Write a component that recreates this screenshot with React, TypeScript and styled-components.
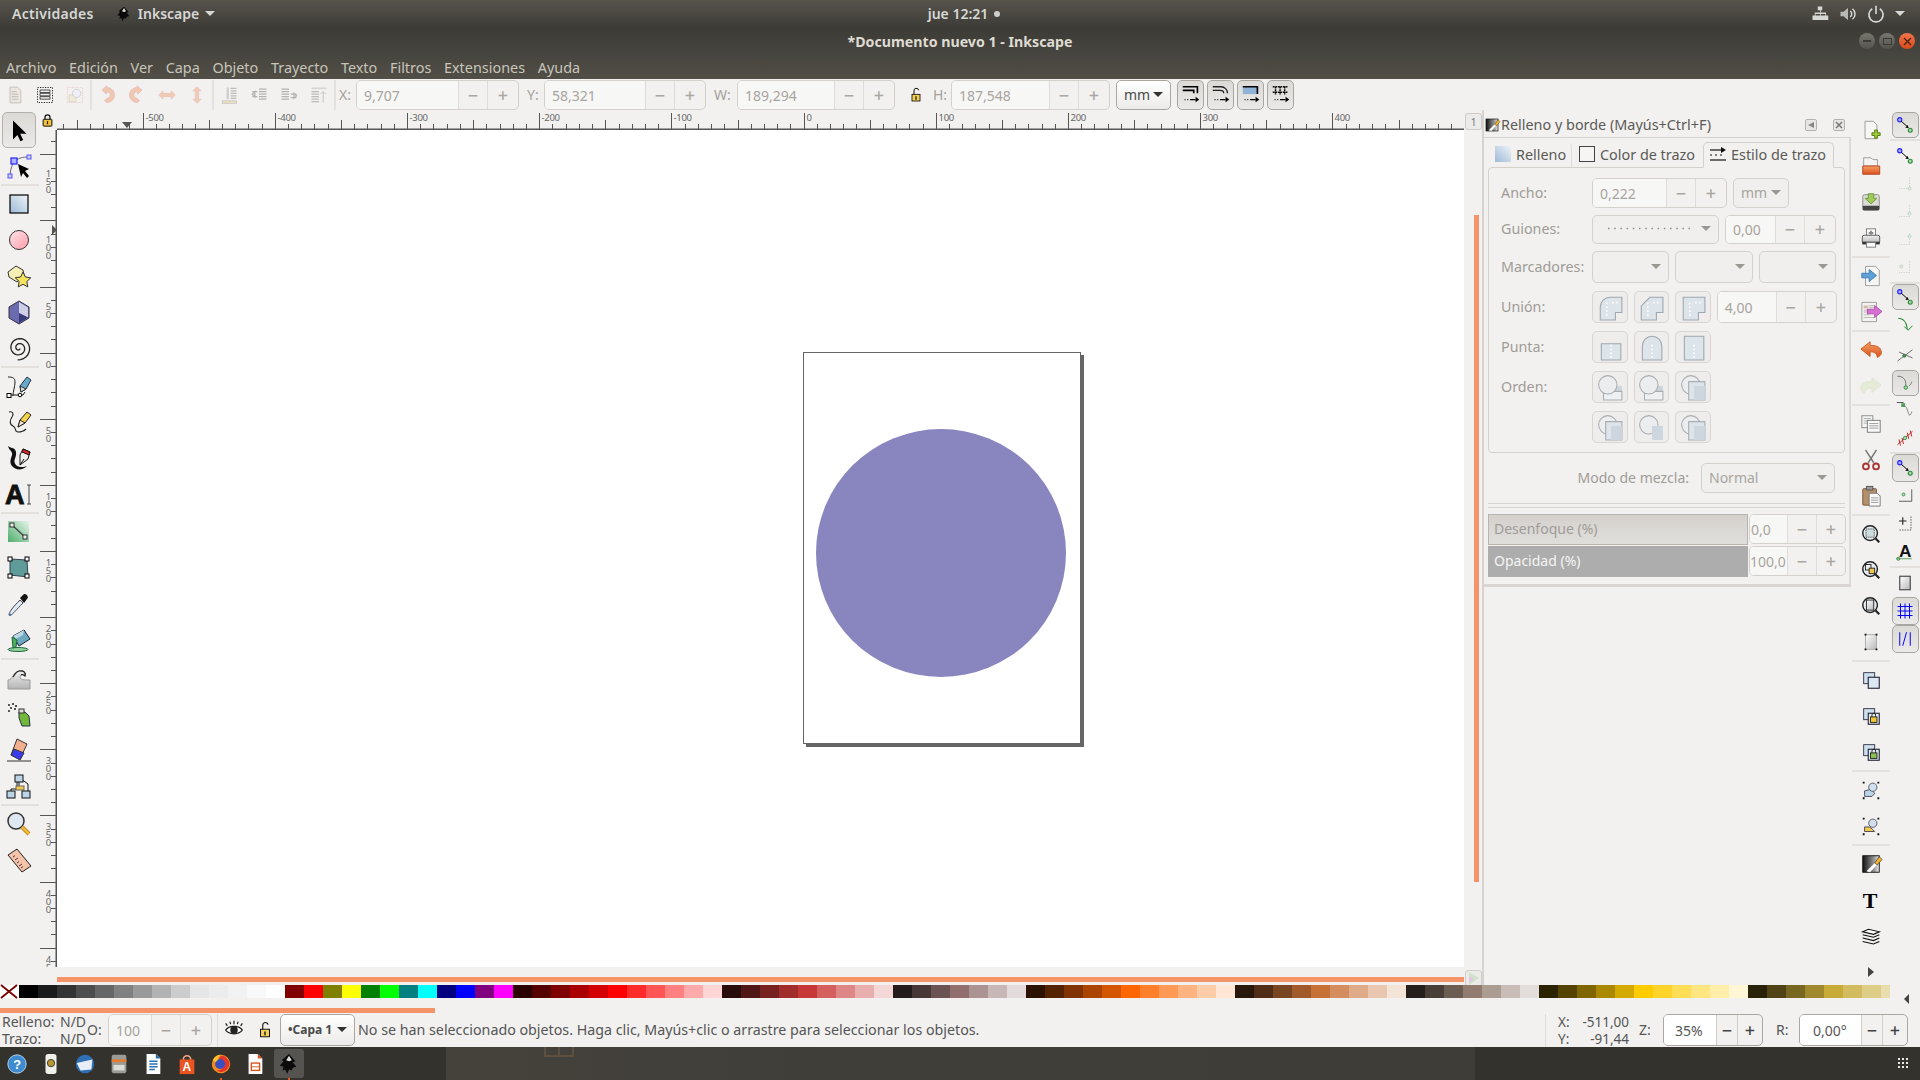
import React from "react";
import styled, { createGlobalStyle } from "styled-components";

const GlobalStyle = createGlobalStyle`
  html, body { margin: 0; padding: 0; background: #f2f1f0; overflow: hidden; }
  body { font-family: "Noto Sans", "Open Sans", sans-serif; font-size: 14.3px; color: #555; }
  svg { overflow: visible; display: block; flex: none; }
`;

const Screen = styled.div`
  width: 1920px; height: 1080px; display: flex; flex-direction: column; overflow: hidden; position: relative;
`;

/* ---- desktop bar + window title ---- */
const TopBar = styled.div`
  height: 27px; flex: none; display: grid; grid-template-columns: 1fr auto 1fr; align-items: center;
  background: linear-gradient(#57544c, #3e3c37); color: #d6d8d6; font-weight: 600; font-size: 14px;
`;
const TopLeft = styled.div`display: flex; align-items: center; padding-left: 12px;`;
const Activities = styled.span`letter-spacing: 0.3px;`;
const TopRight = styled.div`display: flex; align-items: center; justify-content: flex-end; gap: 10px; padding-right: 15px;`;
const AppName = styled.div`display: flex; align-items: center; gap: 6px; margin-left: 22px;`;
const DownCaret = styled.span`
  width: 0; height: 0; border-left: 5px solid transparent; border-right: 5px solid transparent;
  border-top: 5px solid ${(p: { $c?: string }) => p.$c || "#d6d8d6"};
`;
const Clock = styled.div`display: flex; align-items: center; gap: 6px; margin-left: 8px;`;
const Dot = styled.span`width: 6px; height: 6px; border-radius: 50%; background: #cfcfcc;`;

const TitleBar = styled.div`
  height: 52px; flex: none; display: flex; flex-direction: column;
  background: linear-gradient(#3c3b36, #514e47); position: relative;
`;
const TitleText = styled.div`
  height: 29px; flex: none; display: flex; align-items: center; justify-content: center;
  color: #dfdbd2; font-weight: 700; font-size: 14.2px;
`;
const WinButtons = styled.div`position: absolute; right: 5px; top: 6px; display: flex; gap: 4px;`;
const WinBtn = styled.div<{ $close?: boolean }>`
  width: 16px; height: 16px; border-radius: 50%; display: flex; align-items: center; justify-content: center;
  background: ${(p) => (p.$close ? "linear-gradient(#f0764a,#d9491b)" : "linear-gradient(#78766f,#55534d)")};
`;
const MenuBar = styled.div`display: flex; height: 23px; align-items: center; padding: 0 0 1px 6px; box-sizing: border-box; gap: 12.7px; color: #c8c5ba; font-size: 14.4px;`;

/* ---- controls toolbar ---- */
const ControlsBar = styled.div`height: 31px; flex: none; display: flex; align-items: flex-start; padding-top: 1px; box-sizing: border-box;`;
const BarIcon = styled.div<{ $faded?: boolean; $ml?: number }>`
  width: 30px; height: 30px; margin-left: ${(p) => p.$ml || 0}px; flex: none; display: flex; align-items: center; justify-content: center; opacity: ${(p) => (p.$faded ? 0.5 : 1)};
`;
const VSep = styled.div`width: 2px; height: 30px; background: #e3e0dd; flex: none;`;
const BarLabel = styled.div<{ $w: number; $ml?: number }>`
  width: ${(p) => p.$w}px; margin-left: ${(p) => p.$ml || 0}px; height: 30px; line-height: 30px; color: #a5a19c; flex: none; font-size: 14px;
`;
const SpinBox = styled.div<{ $w: number; $h?: number; $on?: boolean }>`
  width: ${(p) => p.$w}px; height: ${(p) => p.$h || 30}px; flex: none; box-sizing: border-box; display: flex;
  border: 1px solid ${(p) => (p.$on ? "#aaa7a2" : "#d4d1cd")}; border-radius: 5px; overflow: hidden;
  color: ${(p) => (p.$on ? "#555" : "#a8a4a0")}; font-size: 14px;
`;
const SpinField = styled.div<{ $pad?: number; $on?: boolean }>`
  flex: 1; min-width: 0; background: ${(p) => (p.$on ? "#fff" : "#f7f7f6")}; padding-left: ${(p) => p.$pad ?? 7}px; display: flex; align-items: center; white-space: nowrap;
`;
const SpinBtn = styled.div<{ $on?: boolean; $w: number }>`
  width: ${(p) => p.$w}px; flex: none; display: flex; align-items: center; justify-content: center; box-sizing: border-box;
  border-left: 1px solid ${(p) => (p.$on ? "#d0cdc9" : "#dedbd8")}; font-size: 18px; font-weight: 500;
  color: ${(p) => (p.$on ? "#444" : "#aaa7a3")};
`;
const ComboBox = styled.div<{ $w: number; $h?: number; $on?: boolean; $ml?: number; $bold?: boolean }>`
  width: ${(p) => p.$w}px; height: ${(p) => p.$h || 30}px; margin-left: ${(p) => p.$ml || 0}px; flex: none; box-sizing: border-box;
  display: flex; align-items: center; justify-content: space-between; padding: 0 7px 1px;
  border: 1px solid ${(p) => (p.$on ? "#aaa7a2" : "#d4d1cd")}; border-radius: 5px;
  background: ${(p) => (p.$on ? "linear-gradient(#fff,#ecebe9)" : "#f0efed")};
  color: ${(p) => (p.$on ? "#4a4a4a" : "#a8a4a0")}; font-size: ${(p) => (p.$bold ? 12 : 14)}px; font-weight: ${(p) => (p.$bold ? 700 : 400)};
`;
const DashSample = styled.svg`margin-left: 8px;`;
const ToggleBtn = styled.div<{ $w?: number; $h?: number }>`
  width: ${(p) => p.$w || 27}px; height: ${(p) => p.$h || 30}px; flex: none; box-sizing: border-box; display: flex; align-items: center; justify-content: center;
  border: 1px solid #a9a6a2; border-radius: 5px; background: linear-gradient(#dcdad7, #ebe9e7);
`;
const ToggleRow = styled.div`display: flex; gap: 3px; margin-left: 6px;`;

/* ---- workspace ---- */
const Workspace = styled.div`flex: 1; display: flex; min-height: 0;`;
const ToolColumn = styled.div`
  width: 40px; flex: none; display: flex; flex-direction: column; align-items: center; padding-top: 2px; box-sizing: border-box;
`;
const ToolBtn = styled.div<{ $on?: boolean }>`
  width: 34px; height: 36px; flex: none; box-sizing: border-box; margin-left: -3px; display: flex; align-items: center; justify-content: center;
  border: 1px solid ${(p) => (p.$on ? "#b4b1ad" : "transparent")}; border-radius: 5px;
  background: ${(p) => (p.$on ? "linear-gradient(#dcdad7,#ebe9e7)" : "none")};
`;
const ToolSep = styled.div`width: 38px; height: 2px; flex: none; margin-left: -1px; background: #e3e0dd;`;

const Center = styled.div`width: 1442px; flex: none; display: flex; flex-direction: column;`;
const HRulerRow = styled.div`height: 20px; flex: none; display: flex;`;
const RulerCorner = styled.div`width: 17px; flex: none; padding-top: 3px; box-sizing: border-box;`;
const MidRow = styled.div`height: 837px; flex: none; display: flex;`;
const VRulerSvg = styled.svg`overflow: hidden;`;
const VDigits = styled.text`
  writing-mode: vertical-rl; text-orientation: upright; font-size: 9.500px; letter-spacing: -5px; fill: #666;
`;
const Canvas = styled.div`width: 1407px; flex: none; background: #fff; position: relative; overflow: hidden;`;
const Page = styled.div`
  position: absolute; left: 746px; top: 222px; width: 278px; height: 392px; box-sizing: border-box; background: #fff;
  border: 1px solid #666; box-shadow: 3px 3px 0 #666;
`;
const Blob = styled.div`
  position: absolute; left: 12px; top: 76px; width: 250px; height: 248px; border-radius: 50%; background: #8885bf;
`;
const VGutter = styled.div`flex: 1; padding: 85px 0 0 10px; box-sizing: border-box;`;
const VThumb = styled.div`width: 5px; height: 667px; background: #f59469;`;
const HBarRow = styled.div`flex: 1; display: flex; min-height: 0;`;
const HTrack = styled.div`width: 1424px; padding: 10px 0 0 17px; box-sizing: border-box; display: flex;`;
const HThumb = styled.div`width: 1407px; height: 5px; background: #f59469;`;
const CornerBtn = styled.div`
  width: 15px; height: 15px; margin: 3px 0 0 1px; border: 1px solid #cfccc8; border-radius: 3px; background: #ecebe9; overflow: hidden;
  display: flex; align-items: center; justify-content: center; color: #777; font-size: 10px;
`;

/* ---- dialog ---- */
const DockPanel = styled.div`
  width: 370px; flex: none; box-sizing: border-box; border-left: 2px solid #d6d3d0; display: flex; flex-direction: column; padding-top: 3px;
`;
const DockHead = styled.div`height: 24px; flex: none; display: flex; align-items: center; gap: 1px; color: #5c5a56; font-size: 14.4px;`;
const DockTitle = styled.div`flex: 1; white-space: nowrap; padding-bottom: 2px;`;
const DockBtns = styled.div`display: flex; gap: 16px; margin-right: 7px;`;
const MiniBtn = styled.div`
  width: 10px; height: 10px; border: 1px solid #b5b2ae; border-radius: 2px; background: #e8e6e4; display: flex; align-items: center; justify-content: center;
`;
const DockFrame = styled.div`
  width: 367px; box-sizing: border-box; border-bottom: 3px solid #d8d5d2; border-right: 2px solid #dcd9d6;
  border-top: 1px solid #d4d1cd; padding: 0 4px 7px; display: flex; flex-direction: column;
`;
const TabRow = styled.div`height: 30px; flex: none; display: flex; align-items: flex-end; position: relative; z-index: 1; margin-bottom: -1px;`;
const Tab = styled.div<{ $w: number; $active?: boolean; $sep?: boolean }>`
  width: ${(p) => p.$w}px; height: 26px; box-sizing: border-box; display: flex; align-items: center; gap: 5px; padding: 0 0 2px 6px; color: #5c5a56; font-size: 14.4px; white-space: nowrap;
  border: 1px solid ${(p) => (p.$active ? "#d4d1cd" : "transparent")}; border-bottom-color: ${(p) => (p.$active ? "#f2f1f0" : "transparent")};
  border-radius: 5px 5px 0 0; background: ${(p) => (p.$active ? "#f2f1f0" : "none")};
  border-right-color: ${(p) => (p.$sep ? "#dedbd8" : p.$active ? "#d4d1cd" : "transparent")};
`;
const StrokeFrame = styled.div`
  border: 1px solid #d4d1cd; border-radius: 4px; padding: 10px 0 9px 12px; display: flex; flex-direction: column; gap: 8px; height: 286px; box-sizing: border-box;
`;
const FormRow = styled.div<{ $h: number; $mt?: number }>`height: ${(p) => p.$h}px; margin-top: ${(p) => p.$mt || 0}px; flex: none; display: flex; align-items: center; gap: 6px;`;
const FormLabel = styled.div`width: 85px; flex: none; color: #a09c97; font-size: 14.3px; padding-bottom: 1px;`;
const StyleBtn = styled.div`
  width: 35.6px; height: 32px; flex: none; box-sizing: border-box; border: 1px solid #d8d5d2; border-radius: 5px; background: #eeedeb; display: flex; align-items: center; justify-content: center;
`;
const BlendRow = styled.div`height: 30px; margin-top: 10px; flex: none; display: flex; align-items: center; justify-content: flex-end; padding-right: 10px; gap: 12px; color: #a09c97; font-size: 14px;`;
const BlendLabel = styled.span`padding-bottom: 2px;`;
const DoubleRule = styled.div`height: 3px; flex: none; margin-top: 10px; border-top: 1px solid #d6d3d0; border-bottom: 1px solid #d6d3d0;`;
const SliderRow = styled.div<{ $first?: boolean }>`display: flex; gap: 1px; height: 31px; margin-top: ${(p) => (p.$first ? 6 : 1)}px; flex: none;`;
const Slider = styled.div<{ $full?: boolean }>`
  width: 260px; flex: none; box-sizing: border-box; padding: 0 0 3px 5px; display: flex; align-items: center; font-size: 14px;
  border: 1px solid ${(p) => (p.$full ? "#adadad" : "#b8b5b1")};
  color: ${(p) => (p.$full ? "#f5f5f5" : "#a09c97")};
  background: ${(p) => (p.$full ? "#adadad" : "linear-gradient(#d4d1cd,#e0dedb)")};
`;

/* ---- right toolbars ---- */
const CmdColumn = styled.div`width: 38px; flex: none; display: flex; flex-direction: column; align-items: center; padding-top: 2px; box-sizing: border-box;`;
const CmdBtn = styled.div`width: 38px; height: 36px; flex: none; display: flex; align-items: center; justify-content: center;`;
const CmdSep = styled.div`width: 38px; height: 2px; flex: none; background: #e3e0dd;`;
const SnapColumn = styled.div`width: 30px; flex: none; display: flex; flex-direction: column; align-items: center; padding-top: 2px; box-sizing: border-box;`;
const SnapBtn = styled.div<{ $h?: number }>`width: 28px; height: ${(p) => p.$h || 28}px; flex: none; display: flex; align-items: center; justify-content: center;`;
const SnapSep = styled.div<{ $h?: number }>`width: 30px; height: 2px; flex: none; margin: ${(p) => ((p.$h || 2) - 2) / 2}px 0; background: #e3e0dd;`;

/* ---- palette + status ---- */
const PaletteRow = styled.div`height: 13px; flex: none; display: flex; position: relative;`;
const NoColor = styled.div`width: 19px; flex: none; background: #fff;`;
const Swatch = styled.div<{ $c: string; $w?: number }>`width: ${(p) => p.$w || 19}px; flex: none; background: ${(p) => p.$c};`;
const PalGap = styled.div`height: 10px; flex: none; padding-top: 10px; box-sizing: border-box;`;
const PalThumb = styled.div`width: 435px; height: 5px; background: #f59469; margin-bottom: 1px;`;
const PalArrow = styled.div`
  position: absolute; right: 11px; top: 0; width: 0; height: 0; border-top: 5px solid transparent; border-bottom: 5px solid transparent; border-right: 5px solid #444; margin-top: 9px;
`;
const StatusBar = styled.div`height: 33px; flex: none; display: flex; align-items: flex-start; color: #555; margin-top: 6px; padding-right: 12px; box-sizing: border-box;`;
const FillInfo = styled.div`
  width: 87px; flex: none; padding-left: 2px; margin-top: -1px; display: grid; grid-template-columns: 58px auto; grid-auto-rows: 17px; font-size: 14px; box-sizing: border-box; line-height: 17px;
`;
const OLabel = styled.div`width: 21px; flex: none; height: 32px; line-height: 32px; font-size: 14px;`;
const StatusSep = styled.div<{ $ml?: number }>`width: 1px; height: 33px; background: #dedbd8; margin-left: ${(p) => p.$ml || 0}px; flex: none;`;
const StatusIcon = styled.div<{ $w: number }>`width: ${(p) => p.$w}px; height: 32px; flex: none; display: flex; align-items: center; justify-content: center;`;
const Message = styled.div`flex: 1; height: 32px; line-height: 31px; padding-left: 3px; white-space: nowrap; color: #555; font-size: 14.25px;`;
const Coords = styled.div`
  width: 71px; margin-left: 12px; flex: none; display: grid; grid-template-columns: auto 1fr; grid-auto-rows: 17px; line-height: 17px; font-size: 13.5px; box-sizing: border-box;
`;
const CoordVal = styled.div`text-align: right;`;
const ZLabel = styled.div<{ $w: number; $ml: number }>`width: ${(p) => p.$w}px; margin-left: ${(p) => p.$ml}px; flex: none; height: 32px; line-height: 32px; font-size: 14px;`;

/* ---- dock ---- */
const DockBar = styled.div`height: 33px; flex: none; display: flex; background: #33322d;`;
const DockLeft = styled.div`width: 446px; flex: none; display: flex; box-sizing: border-box;`;
const DockItem = styled.div<{ $active?: boolean }>`
  width: 34px; height: 33px; flex: none; display: flex; align-items: center; justify-content: center; position: relative; box-sizing: border-box;
  &::before { content: ""; position: absolute; inset: 2px; border-radius: 3px; background: ${(p) => (p.$active ? "#565450" : "none")}; }
  svg { position: relative; }
`;
const RunDot = styled.span`position: absolute; bottom: 0; left: 16px; width: 2px; height: 2px; background: #e95420;`;
const Wallpaper = styled.div`
  width: 1029px; flex: none; background: linear-gradient(90deg, #45423c, #403e39 40%, #3f3d38); overflow: hidden; padding-left: 98px; box-sizing: border-box;
`;
const DockRight = styled.div`flex: 1; display: flex; justify-content: flex-end; align-items: center; padding-right: 11px;`;
const HiddenDefs = styled.svg`position: absolute;`;

/* ---- drawings ---- */
const I = ({ s = 24, children }: { s?: number; children: React.ReactNode }) => (
  <svg width={s} height={s} viewBox="0 0 24 24">{children}</svg>
);

const Defs = () => (
  <HiddenDefs width="0" height="0">
    <defs>
      <linearGradient id="gb" x1="0" y1="1" x2="1" y2="0"><stop offset="0" stopColor="#9dbad6" /><stop offset="1" stopColor="#eef3f8" /></linearGradient>
      <linearGradient id="gp" x1="0" y1="0" x2="1" y2="1"><stop offset="0" stopColor="#ffe6ea" /><stop offset="1" stopColor="#ff9aa8" /></linearGradient>
      <linearGradient id="gg" x1="0" y1="1" x2="1" y2="0"><stop offset="0" stopColor="#4fae6c" /><stop offset="1" stopColor="#e6f4ea" /></linearGradient>
      <linearGradient id="gw" x1="0" y1="0" x2="1" y2="1"><stop offset="0" stopColor="#fff" /><stop offset="1" stopColor="#b9b9b9" /></linearGradient>
      <linearGradient id="go" x1="0" y1="0" x2="0" y2="1"><stop offset="0" stopColor="#f6a163" /><stop offset="1" stopColor="#d9531e" /></linearGradient>
      <linearGradient id="gs" x1="0" y1="0" x2="0" y2="1"><stop offset="0" stopColor="#f0f0f0" /><stop offset="1" stopColor="#b4b4b4" /></linearGradient>
      <linearGradient id="gn" x1="0" y1="0" x2="1" y2="0"><stop offset="0" stopColor="#111" /><stop offset="0.7" stopColor="#999" /><stop offset="1" stopColor="#eee" /></linearGradient>
    </defs>
  </HiddenDefs>
);

const spiralPath = () => {
  const turns = 2.2 * 2 * Math.PI;
  const pts: string[] = [];
  for (let a = 0; a <= turns; a += 0.25) {
    const r = 1 + (a / turns) * 11;
    pts.push(`${(12 + r * Math.cos(a + 0.5)).toFixed(2)} ${(12 + r * Math.sin(a + 0.5)).toFixed(2)}`);
  }
  return "M" + pts.join("L");
};

const Lens = ({ children }: { children?: React.ReactNode }) => (
  <>
    <circle cx="11" cy="11" r="8" fill="#e8eef3" stroke="#222" strokeWidth="1.6" />
    {children}
    <path d="M17 17l4 4" stroke="#222" strokeWidth="2.4" />
  </>
);
const Doc = () => <path d="M5.500 2.500h9l4 4v15h-13z" fill="#f6f6f5" stroke="#999" />;
const Stacked = ({ children }: { children?: React.ReactNode }) => (
  <>
    <rect x="4" y="4" width="12" height="12" fill="#cfe0ee" stroke="#334" />
    <rect x="9" y="9" width="12" height="12" fill="#dce8f2" stroke="#223" strokeWidth="1.2" />
    {children}
  </>
);
const Padlock = ({ c = "#f3c430" }: { c?: string }) => (
  <>
    <rect x="11.500" y="13" width="7" height="6" fill={c} stroke="#222" />
    <path d="M13 13v-2a2 2 0 014 0v2" fill="none" stroke="#222" />
  </>
);

const toolIcons: Record<string, React.ReactNode> = {
  select: <path d="M6 2.500v19l4.400-4.600 3 6.400 2.800-1.300-3-6.200h6.300z" fill="#000" />,
  node: (
    <>
      <path d="M6 10C4 13 3.500 17 3 21M10 5.500c4-2 7-2.500 10-2.500" fill="none" stroke="#667" />
      <rect x="4" y="4" width="6" height="6" fill="#b0b4ff" stroke="#22f" strokeWidth="1.200" />
      <rect x="20" y="1" width="4" height="4" fill="#ccd" stroke="#55f" />
      <rect x="1" y="20" width="4" height="4" fill="#ccd" stroke="#55f" />
      <path d="M11 10l11 5-4 2 4 5-2 2-4-5-2 4z" fill="#000" />
    </>
  ),
  rect: <rect x="3" y="3" width="18" height="18" fill="url(#gb)" stroke="#000" strokeWidth="1.200" />,
  ellipse: <circle cx="12" cy="12" r="9.500" fill="url(#gp)" stroke="#333" strokeWidth="1" />,
  star: (
    <>
      <path d="M9 2l7 4 1 5-7 7-8-5-1-5z" fill="#f6efb5" stroke="#333" />
      <path d="M16 8l2.400 5 5.400.8-4 3.700 1 5.400-4.800-2.600-4.800 2.600 1-5.400-4-3.700 5.400-.8z" fill="#f6e45e" stroke="#333" />
    </>
  ),
  cube: (
    <>
      <path d="M12 1l10 6v11l-10 6-10-6V7z" fill="#6a6aae" stroke="#334" />
      <path d="M12 13V2l9 5.500v10z" fill="#cfcfe8" />
      <path d="M12 13l9 4.500-9 5.500z" fill="#383878" />
    </>
  ),
  spiral: <path d={spiralPath()} fill="none" stroke="#222" strokeWidth="1.300" />,
  pen: (
    <>
      <path d="M1 3c5 0 7 1 7 5 0 5-2 9-2 14" fill="none" stroke="#222" />
      <path d="M2 21h14l2-3" fill="none" stroke="#222" />
      <rect x="0" y="19.500" width="4" height="4" fill="#fff" stroke="#000" />
      <circle cx="13" cy="21" r="1.800" fill="#fff" stroke="#000" />
      <path d="M14 18l-1-6 7-9 4 3-5 9z" fill="#68aac8" stroke="#234" />
      <path d="M13 12l6 3-5 3z" fill="#eadfc6" stroke="#234" />
    </>
  ),
  pencil: (
    <>
      <path d="M2 2c4-1 5 2 3 5s-3 7 1 9 1 6 5 6 6-1 8-3" fill="none" stroke="#222" strokeWidth="1.100" />
      <path d="M11 17l2-7 7-8 4 3-6 8z" fill="#f6d24a" stroke="#222" />
      <path d="M11 17l2-7 5 3z" fill="#f5e6cc" stroke="#222" />
    </>
  ),
  calli: (
    <>
      <path d="M1 0c4 3 7 1 8 6 1 6-4 8 0 13 3 3 9 2 11 1-4 4-11 5-15 0C1 15 6 10 5 7 4 4 2 4 1 0z" fill="#111" />
      <path d="M16 3l7 3-2 7-8 6 0-10z" fill="#eee" stroke="#111" />
      <path d="M16 3l7 3-1 3-7-3z" fill="#d22" stroke="#111" />
      <path d="M13 19l4-6" stroke="#111" />
    </>
  ),
  text: (
    <>
      <text x="-2" y="22" fontFamily="Liberation Sans, sans-serif" fontWeight="700" fontSize="27" fill="#111" stroke="#111" strokeWidth=".9">A</text>
      <path d="M20 3h4M22 3v19M20 22h4" fill="none" stroke="#333" strokeWidth=".9" />
    </>
  ),
  gradient: (
    <>
      <rect x="1" y="1" width="21" height="21" fill="url(#gg)" />
      <path d="M5 5l13 12" stroke="#444" strokeWidth="1.400" />
      <rect x="3" y="3" width="4" height="4" fill="#eee" stroke="#333" />
      <rect x="16" y="15" width="4" height="4" fill="#eee" stroke="#333" />
    </>
  ),
  mesh: (
    <>
      <path d="M3 3l17 1 1 17-18-2z" fill="#5f9b98" stroke="#345" />
      <rect x="1" y="1" width="4" height="4" fill="#fff" stroke="#000" />
      <rect x="18" y="1" width="4" height="4" fill="#fff" stroke="#000" />
      <rect x="1" y="18" width="4" height="4" fill="#fff" stroke="#000" />
      <rect x="18" y="18" width="4" height="4" fill="#fff" stroke="#000" />
    </>
  ),
  dropper: (
    <>
      <path d="M2 23c0-3 4-8 11-15l3 3C9 18 6 22 4 23z" fill="#dfe9f0" stroke="#445" />
      <path d="M1.500 23.500l2-2 1 1.200-1 1z" fill="#3b78b0" />
      <path d="M13 6l3-3c2-3 7 2 4 4l-3 4z" fill="#111" />
    </>
  ),
  bucket: (
    <>
      <ellipse cx="11" cy="21.500" rx="10" ry="2" fill="#8fd39a" stroke="#264" />
      <path d="M6 8l11-6 6 9-11 7z" fill="#6ea8c0" stroke="#123" />
      <path d="M6 8l11-6-1 5-7 4z" fill="#b9d6e2" />
      <path d="M5 9l1 11 3-1 1-7z" fill="#4cae5b" stroke="#264" />
    </>
  ),
  tweak: (
    <>
      <path d="M1 23V14c5 0 5-8 11-9 5-1 7 2 6 5-2-2-5-2-5 1s4 3 10 3v9z" fill="url(#gs)" stroke="#999" />
      <path d="M6 11c2-3 3-5.500 6-6 5-1 7 2 6 5-1-1-2.500-2-4-1" fill="none" stroke="#222" strokeWidth="1.200" />
    </>
  ),
  spray: (
    <>
      <path d="M12 10h6l4 4 1 10-8 0-3-8z" fill="#72b63c" stroke="#234" />
      <rect x="12" y="7" width="5" height="4" fill="#ddd" stroke="#333" />
      <g fill="#222"><circle cx="2" cy="3" r="1" /><circle cx="6" cy="2" r="1" /><circle cx="9" cy="4" r="1.100" /><circle cx="4" cy="6" r="1" /><circle cx="8" cy="7" r="1" /><circle cx="2" cy="9" r="1" /></g>
    </>
  ),
  eraser: (
    <>
      <path d="M10 1l10 5-7 15-9-4z" fill="#f2b08f" stroke="#333" />
      <path d="M7 11l10 4-4 7-9-5z" fill="#3b3bee" stroke="#333" />
      <path d="M0 23h24" stroke="#333" />
    </>
  ),
  connector: (
    <>
      <path d="M10 8v7H4v4M14 5l7 5v8M12 7v6" fill="none" stroke="#111" />
      <rect x="8" y="1" width="8" height="7" fill="#bcd4e8" stroke="#111" />
      <rect x="9" y="12" width="8" height="4" fill="#f3c84b" stroke="#666" />
      <rect x="0" y="17" width="8" height="7" fill="#bcd4e8" stroke="#111" />
      <rect x="15" y="17" width="8" height="7" fill="#bcd4e8" stroke="#111" />
    </>
  ),
  zoom: (
    <>
      <circle cx="9" cy="9" r="8" fill="#dde8f2" stroke="#333" strokeWidth="1.500" />
      <path d="M15 15l7 7" stroke="#c98a14" strokeWidth="4" />
      <path d="M15 15l7 7" stroke="#f2c040" strokeWidth="2" />
    </>
  ),
  measure: (
    <>
      <path d="M1 7l9-6 14 17-9 6z" fill="#f3c3aa" stroke="#222" />
      <path d="M6 9l2-1.500M8 12l3-2M10 15l2-1.500M12 18l3-2M14 20l2-1.500" stroke="#633" />
    </>
  ),
};

const toolLayout = ["select", "node", "-", "rect", "ellipse", "star", "cube", "spiral", "-", "pen", "pencil", "calli", "text", "-", "gradient", "mesh", "dropper", "bucket", "-", "tweak", "spray", "eraser", "connector", "-", "zoom", "measure"];

const cmdIcons: Record<string, React.ReactNode> = {
  new: (
    <>
      <Doc />
      <path d="M13 15h3v-3h3v3h3v3h-3v3h-3v-3h-3z" fill="#a2c93a" stroke="#4f7a10" />
    </>
  ),
  open: (
    <>
      <path d="M4 3h8l2 2h5v7H4z" fill="#f4f4f2" stroke="#999" />
      <path d="M3 12h18.500v9H3z" fill="url(#go)" stroke="#b8431a" />
    </>
  ),
  save: (
    <>
      <rect x="3" y="4" width="18" height="17" rx="2" fill="#dcdcd8" stroke="#888" />
      <rect x="3" y="16" width="18" height="5" rx="1" fill="#444" />
      <path d="M9 3h6v5h3.500L12 14 5.500 8H9z" fill="#9fcc5c" stroke="#6c9a35" />
    </>
  ),
  print: (
    <>
      <rect x="7" y="2" width="10" height="8" fill="#fafafa" stroke="#777" />
      <rect x="2.500" y="9" width="19" height="9" rx="2" fill="url(#gs)" stroke="#555" />
      <rect x="2.500" y="16" width="19" height="3" fill="#333" />
      <rect x="7" y="17" width="10" height="5" fill="#fafafa" stroke="#777" />
      <path d="M11 4h2v1.500h1.500v2h-1.500v1h-2v-1H9.500v-2H11z" fill="#888" />
    </>
  ),
  import: (
    <>
      <path d="M6 1.500h11l4 4v17H6z" fill="#f6f6f5" stroke="#999" />
      <path d="M2 9h8V5l8 6.500L10 18v-4H2z" fill="#5fa0d6" stroke="#3d79b3" />
    </>
  ),
  export: (
    <>
      <path d="M2 1.500h16v21H2z" fill="#f4f2f0" stroke="#999" />
      <path d="M4 5h5v3H4z" fill="#d8b8a8" />
      <path d="M10 5h6M10 7h6M4 10h10M4 12h6M4 15h6M4 18h12" stroke="#b9b5b0" />
      <path d="M8 9h8V5l8 6.500L16 18v-4H8z" fill="#d56fd0" stroke="#b14dae" />
    </>
  ),
  undo: <path d="M11 3L1 11l10 8v-5c4 0 7 1 8 6 4-2 5-4 4-7-1-5-6-6-12-6z" fill="url(#go)" stroke="#c9561d" />,
  redo: <path d="M13 3l10 8-10 8v-5c-4 0-7 1-8 6-4-2-5-4-4-7 1-5 6-6 12-6z" fill="#e6ebd8" stroke="#dfe5cf" />,
  copy: (
    <>
      <rect x="2" y="3" width="12" height="13" fill="#f5f5f5" stroke="#888" />
      <path d="M4 6h8M4 8.500h8M4 11h8" stroke="#aaa" />
      <rect x="8" y="8" width="14" height="13" fill="#f8f8f8" stroke="#777" />
      <path d="M10 11.500h10M10 14h10M10 16.500h10" stroke="#999" />
    </>
  ),
  cut: (
    <>
      <path d="M6 1l9 14M18 1L9 15" stroke="#777" strokeWidth="1.600" />
      <circle cx="6.500" cy="19" r="3.200" fill="none" stroke="#a33" strokeWidth="2" />
      <circle cx="17.500" cy="19" r="3.200" fill="none" stroke="#a33" strokeWidth="2" />
    </>
  ),
  paste: (
    <>
      <rect x="3" y="4" width="15" height="18" rx="1" fill="#b4906a" stroke="#76593a" />
      <rect x="7" y="1.500" width="7" height="4" fill="#999" stroke="#555" />
      <path d="M10 9h9l3 3v11H10z" fill="#f8f8f8" stroke="#777" />
      <path d="M12 14h8M12 16.500h8M12 19h8" stroke="#999" />
    </>
  ),
  zsel: (
    <Lens><rect x="6.500" y="6.500" width="9" height="9" fill="#cdd" stroke="#222" strokeDasharray="1 1" /></Lens>
  ),
  zdraw: (
    <Lens>
      <rect x="6" y="6" width="6" height="6" fill="#eee" stroke="#222" />
      <rect x="10" y="10" width="6" height="6" fill="#f2c84b" stroke="#222" />
    </Lens>
  ),
  zpage: (
    <Lens><rect x="7" y="5.500" width="8" height="11" fill="url(#gw)" stroke="#222" /></Lens>
  ),
  zwidth: (
    <>
      <rect x="6" y="4" width="12" height="16" fill="url(#gw)" stroke="#aaa" />
      <path d="M5 3h2v2H5zM17 3h2v2h-2zM5 19h2v2H5zM17 19h2v2h-2z" fill="#111" />
    </>
  ),
  dup: <Stacked />,
  clone: <Stacked><Padlock /></Stacked>,
  unclone: <Stacked><Padlock c="#8cc152" /></Stacked>,
  group: (
    <>
      <path d="M3 3h2v2H3zM19 3h2v2h-2zM3 20h2v2H3zM19 20h2v2h-2z" fill="#111" />
      <path d="M5 18v-5l8-2 3 5-3 3H5z" fill="#bcd4e8" stroke="#445" />
      <circle cx="14" cy="9" r="4.500" fill="#cfe0ee" stroke="#556" />
    </>
  ),
  ungroup: (
    <>
      <path d="M3 3h2v2H3zM19 3h2v2h-2zM3 20h2v2H3zM19 20h2v2h-2z" fill="#111" />
      <path d="M5 18v-5h5l3 2 3 3H5z" fill="#f3c84b" stroke="#445" />
      <circle cx="14" cy="9" r="4.500" fill="#cfe0ee" stroke="#556" />
    </>
  ),
  fill: (
    <>
      <rect x="3" y="3" width="18" height="18" fill="url(#gn)" stroke="#111" />
      <path d="M7 20L20 7l3 1L11 21z" fill="#fff" />
      <path d="M16 11l5-7 3 3-5 6z" fill="#f3b32c" stroke="#111" strokeWidth=".6" />
    </>
  ),
  typo: (
    <text x="3" y="21" fontFamily="Liberation Serif, serif" fontWeight="700" fontSize="24" fill="#000">T</text>
  ),
  layers: (
    <>
      <path d="M2 7l7-3 13 3-7 3z" fill="#fff" stroke="#111" strokeWidth="1.300" />
      <path d="M2 10.500l13 3 7-3M2 14.500l13 3 7-3M2 18.500l13 3 7-3" fill="none" stroke="#111" strokeWidth="1.300" />
    </>
  ),
};

const cmdLayout = ["new", "open", "save", "print", "-", "import", "export", "-", "undo", "redo", "-", "copy", "cut", "paste", "-", "zsel", "zdraw", "zpage", "zwidth", "-", "dup", "clone", "unclone", "-", "group", "ungroup", "-", "fill", "typo", "layers", ">"];

const SnapLink = () => (
  <>
    <circle cx="5" cy="5" r="2.800" fill="#a9a9ff" stroke="#22f" strokeWidth="1.500" />
    <path d="M7 7l8 7" stroke="#000" strokeWidth="1.300" />
    <path d="M17 16l-4.500-.5 3-3.500z" fill="#000" />
    <circle cx="19" cy="19" r="2.600" fill="#a8d8a8" stroke="#2a8a3c" strokeWidth="1.500" />
  </>
);
const FaintCorner = ({ x, y }: { x: number; y: number }) => (
  <g opacity=".45">
    <path d="M18 3v15H4" fill="none" stroke="#7ea97e" strokeDasharray="2 1.500" />
    <circle cx={x} cy={y} r="2" fill="#cfe5cf" stroke="#6ea06e" />
  </g>
);
const snapIcons: Record<string, React.ReactNode> = {
  link: <SnapLink />,
  c1: <FaintCorner x={18} y={18} />,
  c2: <FaintCorner x={18} y={14} />,
  c3: <FaintCorner x={18} y={7} />,
  c4: <FaintCorner x={7} y={10} />,
  curve: (
    <>
      <path d="M3 3c6 0 11 4 12 14" fill="none" stroke="#1a8a28" strokeWidth="1.400" />
      <path d="M11 14l5 5 6-6" fill="none" stroke="#1a8a28" strokeWidth="1.300" />
    </>
  ),
  cross: (
    <>
      <path d="M2 20L22 5M4 8l18 8" stroke="#444" />
      <circle cx="11" cy="13" r="2" fill="#4ea05a" stroke="#1c6a2a" />
    </>
  ),
  smooth: (
    <>
      <path d="M2 3c6 0 12 3 11 13" fill="none" stroke="#666" strokeWidth="1.200" />
      <path d="M17 16c2-1 4-4 4-6" fill="none" stroke="#666" />
      <circle cx="13" cy="18" r="2.300" fill="#a8d8a8" stroke="#2a8a3c" strokeWidth="1.300" />
    </>
  ),
  cusp: (
    <>
      <path d="M9 5c6 1 6 9 9 14 2-1 3-3 3-5" fill="none" stroke="#666" />
      <path d="M1 2h9" stroke="#222" />
      <rect x="7" y="3" width="5" height="5" fill="#4ea05a" />
    </>
  ),
  mid: (
    <>
      <path d="M2 21L22 3" stroke="#c22" strokeWidth="1.300" />
      <path d="M4 14l2 8M8 12l2 8M15 5l2 8M19 2l2 8" stroke="#c22" strokeWidth="1.300" />
      <circle cx="12" cy="12" r="2.300" fill="#a8d8a8" stroke="#2a8a3c" />
    </>
  ),
  box: (
    <>
      <path d="M21 3v16H4" fill="none" stroke="#333" />
      <circle cx="10" cy="10" r="2" fill="#a8d8a8" stroke="#2a8a3c" />
    </>
  ),
  plus: (
    <>
      <path d="M20 2v18H3" fill="none" stroke="#333" strokeDasharray="2 1.500" />
      <path d="M9 3v10M4 8h10" stroke="#222" strokeWidth="1.500" />
    </>
  ),
  textA: (
    <>
      <text x="4" y="19" fontFamily="Liberation Sans, sans-serif" fontWeight="700" fontSize="23" fill="#111">A</text>
      <path d="M1 21h20" stroke="#5aa060" strokeWidth="1.300" />
      <circle cx="3" cy="21" r="2" fill="none" stroke="#2a8a3c" strokeWidth="1.300" />
    </>
  ),
  page: <rect x="5" y="3" width="14" height="18" fill="url(#gw)" stroke="#444" strokeWidth="1.500" />,
  grid: <path d="M2 6h20M2 12h20M2 18h20M6 2v20M12 2v20M18 2v20" stroke="#00f" strokeWidth="1.300" fill="none" />,
  guide: <path d="M5 3v18M19 3v18M14 3L9 21" stroke="#00f" strokeWidth="1.300" fill="none" />,
};

const snapLayout: [string, boolean, number][] = [
  ["link", true, 26], ["-", false, 4], ["link", false, 28], ["c1", false, 28], ["c2", false, 28], ["c3", false, 28], ["c4", false, 28], ["-", false, 2],
  ["link", true, 26], ["curve", false, 30], ["cross", false, 30], ["smooth", true, 26], ["cusp", false, 28], ["mid", false, 28], ["-", false, 2],
  ["link", true, 28], ["box", false, 28], ["plus", false, 28], ["textA", false, 28], ["-", false, 2],
  ["page", false, 29], ["grid", true, 28], ["guide", true, 28],
];

const barIcons: Record<string, React.ReactNode> = {
  selall: (
    <>
      <path d="M6 2.500h9l4 4v15H6z" fill="#e9dccf" stroke="#888" />
      <path d="M8 8h6M8 11h8M8 14h8M8 17h8" stroke="#777" />
    </>
  ),
  selin: (
    <>
      <rect x="3" y="3" width="18" height="18" fill="none" stroke="#000" strokeDasharray="1.500 1.500" />
      <path d="M6 6h12v3H6zM6 10h12v3H6zM6 14h12v3H6z" fill="#eee" stroke="#333" />
    </>
  ),
  desel: (
    <>
      <rect x="3" y="3" width="18" height="18" fill="none" stroke="#e6a0a0" strokeDasharray="1.500 1.500" />
      <rect x="5" y="12" width="8" height="8" fill="#f0e4c8" stroke="#c9b98a" />
      <circle cx="14" cy="10" r="5" fill="#eef" stroke="#aaa" />
    </>
  ),
  rotl: <path d="M12 3a9 9 0 010 18l-3-2 3-3a4 4 0 000-8l-1 3-5-5 6-5z" fill="#efa070" stroke="#d88" />,
  rotr: <path d="M12 3a9 9 0 000 18l3-2-3-3a4 4 0 010-8l1 3 5-5-6-5z" fill="#efa070" stroke="#d88" />,
  fliph: <path d="M2 12l5-5v3h10V7l5 5-5 5v-3H7v3z" fill="#efa478" stroke="#d88" strokeWidth=".6" />,
  flipv: <path d="M12 2l5 5h-3v10h3l-5 5-5-5h3V7H7z" fill="#efa478" stroke="#d88" strokeWidth=".6" />,
  top: (
    <>
      <path d="M9 3h3v14H9z" fill="#888" opacity=".6" />
      <path d="M14 4h7M14 7h7M14 10h7M14 13h7M14 16h7" stroke="#888" strokeWidth="1.500" />
      <rect x="4" y="19" width="17" height="3" fill="#e0d190" stroke="#a99" />
    </>
  ),
  up: <path d="M12 5h9M12 8h9M12 11h9M12 14h9M12 17h9M4 8h6M4 14h6M4 11l3-3v6z" stroke="#777" strokeWidth="1.500" fill="none" />,
  down: <path d="M3 5h9M3 8h9M3 11h9M3 14h9M3 17h9M14 11h7M14 15h7M21 13l-3-3v6z" stroke="#777" strokeWidth="1.500" fill="none" />,
  bot: (
    <>
      <rect x="3" y="3" width="18" height="2" fill="#bbb" />
      <path d="M3 8h9M3 11h9M3 14h9M3 17h9M3 20h9" stroke="#888" strokeWidth="1.500" />
      <path d="M17 21V8M14 11l3-3 3 3" fill="none" stroke="#888" />
    </>
  ),
  lockClosed: (
    <>
      <rect x="5" y="10" width="14" height="11" rx="1" fill="#f2c33a" stroke="#111" strokeWidth="1.600" />
      <path d="M8 10V7a4 4 0 018 0v3" fill="none" stroke="#111" strokeWidth="2" />
      <rect x="11" y="13" width="2" height="5" fill="#222" />
    </>
  ),
  lockOpen: (
    <>
      <rect x="6" y="11" width="12" height="10" fill="#f4cf55" stroke="#111" strokeWidth="1.300" />
      <path d="M9 11V6a3.500 3.500 0 017-1" fill="none" stroke="#111" strokeWidth="1.500" />
      <path d="M11 14h2v5h-2z" fill="#222" />
    </>
  ),
  eye: (
    <>
      <path d="M2 12c4-6 16-6 20 0-4 6-16 6-20 0z" fill="#fff" stroke="#111" strokeWidth="1.500" />
      <circle cx="12" cy="12" r="4.500" fill="#222" />
      <path d="M4 7L2 4M8 5L7 2M12 5V1M16 5l1-3M20 7l2-3" stroke="#111" strokeWidth="1.300" />
    </>
  ),
};

const ScaleToggle = ({ kind }: { kind: number }) => (
  <I s={22}>
    {kind === 0 && <path d="M3 3h16v7M3 7h12v3" fill="none" stroke="#000" strokeWidth="1.800" />}
    {kind === 1 && <path d="M3 3h9c4 0 7 3 7 7M3 7h8c3 0 4 1 4 3" fill="none" stroke="#222" strokeWidth="1.400" />}
    {kind === 2 && (
      <>
        <rect x="3" y="3" width="16" height="8" fill="#8fb2d6" />
        <path d="M3 3h16v8" fill="none" stroke="#000" strokeWidth="1.800" />
      </>
    )}
    {kind === 3 && <path d="M3 3h16M3 9h16M6 3v9M11 3v9M16 3v9" stroke="#000" strokeWidth="1.500" strokeDasharray="2 .8" fill="none" />}
    <path d="M5 17h1M8 17h1M11 17h6" stroke="#000" strokeWidth="1.400" />
    <path d="M17 14v6l4-3z" fill="#000" />
  </I>
);

const joinCap = (kind: string) => {
  const b = "#9fa8b0";
  const f = "#dde4ea";
  const dots = <path d="M14 8h6M9 8v14" stroke="#fff" strokeWidth="1.500" strokeDasharray="1.500 2" />;
  const mid = <path d="M13 10v14" stroke="#fff" strokeWidth="1.500" strokeDasharray="1.500 2" />;
  switch (kind) {
    case "j1": return <I s={26}><path d="M3 24V12C3 7 7 3 12 3h11v14h-6v7z" fill={f} stroke={b} />{dots}</I>;
    case "j2": return <I s={26}><path d="M3 24V11l8-8h12v14h-6v7z" fill={f} stroke={b} />{dots}</I>;
    case "j3": return <I s={26}><path d="M3 24V3h20v14h-6v7z" fill={f} stroke={b} />{dots}</I>;
    case "c1": return <I s={26}><path d="M4 24V9h18v15z" fill={f} stroke={b} />{mid}</I>;
    case "c2": return <I s={26}><path d="M4 24V11a9 9 0 0118 0v13z" fill={f} stroke={b} />{mid}</I>;
    case "c3": return <I s={26}><path d="M4 24V2h18v22z" fill={f} stroke={b} />{mid}</I>;
    default: return null;
  }
};
const OrderIcon = ({ n }: { n: number }) => {
  const circle = <circle cx="10" cy="10" r="8.500" fill="#ecedee" stroke="#a8aeb4" />;
  const stroke = <path d="M6 24v-8h17v8z" fill="#eef0f2" stroke="#a8aeb4" />;
  const back = <path d="M8 24V7h15v17z" fill="#dde4ea" stroke="#a8aeb4" />;
  const fill = <rect x="13" y="11" width="10" height="13" fill="#cdd6de" />;
  const order = n === 0 || n === 1 ? [fill, stroke, circle] : n === 4 ? [circle, fill] : [circle, back, fill];
  return <I s={26}>{order.map((e, i) => <React.Fragment key={i}>{e}</React.Fragment>)}</I>;
};

const swatches = [
  "#000000","#1a1a1a","#333333","#4d4d4d","#666666","#808080","#999999","#b3b3b3","#cccccc","#e6e6e6","#ececec","#f2f2f2","#f9f9f9","#ffffff",
  "#800000","#ff0000","#808000","#ffff00","#008000","#00ff00","#008080","#00ffff","#000080","#0000ff","#800080","#ff00ff",
  "#2b0000","#550000","#800000","#aa0000","#d40000","#ff0000","#ff2a2a","#ff5555","#ff8080","#ffaaaa","#ffd5d5",
  "#280b0b","#501616","#782121","#a02c2c","#c83737","#d35f5f","#de8787","#e9afaf","#f4d7d7",
  "#241c1c","#483737","#6c5353","#916f6f","#ac9393","#c8b7b7","#e3dbdb",
  "#2b1100","#552200","#803300","#aa4400","#d45500","#ff6600","#ff7f2a","#ff9955","#ffb380","#ffccaa","#ffe6d5",
  "#28170b","#502d16","#784421","#a05a2c","#c87137","#d38d5f","#deaa87","#e9c6af","#f4e3d7",
  "#241f1c","#483e37","#6c5d53","#917c6f","#ac9d93","#c8beb7","#e3dedb",
  "#2b2200","#554400","#806600","#aa8800","#d4aa00","#ffcc00","#ffd42a","#ffdd55","#ffe680","#ffeeaa","#fff6d5",
  "#28220b","#504416","#786721","#a0892c","#c8ab37","#d3bc5f","#decd87",
];

const HRuler = () => {
  const zero = 746.6;
  const step = 13.22;
  const ticks: React.ReactNode[] = [];
  for (let i = -56; i <= 49; i++) {
    const x = Math.round(zero + i * step) + 0.5;
    const major = i % 10 === 0;
    const mid = i % 5 === 0;
    ticks.push(<line key={i} x1={x} x2={x} y1={major ? 3 : mid ? 10 : 14} y2={19} stroke="#555" />);
    if (major) {
      ticks.push(
        <text key={`t${i}`} x={x + 2} y={11} fontSize="9.500" fill="#666" letterSpacing="-0.3">{i * 10}</text>
      );
    }
  }
  return (
    <svg width="1407" height="20">
      <rect x="0" y="18.500" width="1407" height="1.500" fill="#555" />
      {ticks}
      <path d="M65 12h10l-5 6z" fill="#555" />
    </svg>
  );
};

const VRuler = () => {
  const zero = 222.7;
  const step = 13.22;
  const out: React.ReactNode[] = [];
  for (let i = -16; i <= 46; i++) {
    const y = Math.round(zero + i * step) + 0.5;
    const major = i % 5 === 0;
    out.push(<line key={i} x1={major ? 0 : 11} x2={17} y1={y} y2={y} stroke="#555" />);
    if (major) {
      const v = i * 10;
      // the minus sign is not drawn by the ruler, it only leaves an empty slot
      out.push(
        <VDigits key={`d${i}`} x={8.5} y={y + (v < 0 ? 12 : 4)}>{Math.abs(v)}</VDigits>
      );
    }
  }
  return (
    <VRulerSvg width="17" height="837">
      <rect x="15.500" y="0" width="1.500" height="837" fill="#555" />
      {out}
      <path d="M12 95l5 5-5 5z" fill="#555" />
    </VRulerSvg>
  );
};

const Spin = ({ value, w, on, h, pad, btn = [29, 31] }: { value: string; w: number; on?: boolean; h?: number; pad?: number; btn?: number[] }) => (
  <SpinBox $w={w} $on={on} $h={h}>
    <SpinField $on={on} $pad={pad}>{value}</SpinField>
    <SpinBtn $on={on} $w={btn[0]}>−</SpinBtn>
    <SpinBtn $on={on} $w={btn[1]}>+</SpinBtn>
  </SpinBox>
);

const Combo = ({ text, w, h, on, ml, bold, caret }: { text?: string; w: number; h?: number; on?: boolean; ml?: number; bold?: boolean; caret?: string }) => (
  <ComboBox $w={w} $h={h} $on={on} $ml={ml} $bold={bold}>
    <span>{text}</span>
    <DownCaret $c={caret || (on ? "#333" : "#9b9792")} />
  </ComboBox>
);

const Inkblot = ({ s = 20 }: { s?: number }) => (
  <I s={s}>
    <path d="M12 1l7 8-3 1 4 5-4 1-1 3-3-1-2 5-2-5-3 1 1-4-4-1 4-5-2-1z" fill="#0b0b0b" />
    <path d="M12 3l3 5-3 1-3-1z" fill="#ddd" />
  </I>
);

const dockIcons: React.ReactNode[] = [
  <I s={22}><circle cx="12" cy="12" r="10" fill="#3f8bd0" stroke="#b9d6ef" strokeWidth="1" /><text x="8" y="17" fontSize="14" fontWeight="700" fill="#fff" fontFamily="Liberation Sans, sans-serif">?</text></I>,
  <I s={22}><rect x="6" y="1" width="12" height="22" rx="3" fill="#f0f0ea" /><circle cx="12" cy="11" r="4" fill="#b8982c" stroke="#333" /></I>,
  <I s={22}><circle cx="12" cy="12" r="10" fill="#2f6fb5" /><path d="M3 11l17-4-1 11-12 1z" fill="#e8eef5" /></I>,
  <I s={22}><rect x="4" y="2" width="16" height="20" rx="2" fill="#9a9a96" /><rect x="4" y="7" width="16" height="3" fill="#e57c2e" /><rect x="6" y="13" width="12" height="6" fill="#dcdcd8" /></I>,
  <I s={22}><path d="M5 1h10l5 5v17H5z" fill="#fff" /><path d="M15 1l5 5h-5z" fill="#2a6fb2" /><path d="M8 9h9M8 12h9M8 15h9M8 18h6" stroke="#2a6fb2" strokeWidth="1.600" /></I>,
  <I s={22}><path d="M4 7h16v16H4z" fill="#e95420" /><path d="M8 7a4 4 0 018 0" fill="none" stroke="#f4a886" strokeWidth="1.800" /><text x="7" y="20" fontSize="13" fontWeight="700" fill="#fff" fontFamily="Liberation Sans, sans-serif">A</text></I>,
  <I s={22}><circle cx="12" cy="12" r="10" fill="#f58a1f" /><path d="M12 3a9 9 0 019 9 9 9 0 01-14 7c4 0 8-2 8-6s-4-4-6-3c0-3 1-5 3-7z" fill="#e6352b" /><circle cx="11" cy="12" r="5.500" fill="#3a4fc0" /><path d="M3 8c2-4 5-6 9-6-2 1-3 3-3 5l-3 3z" fill="#fcc12c" /></I>,
  <I s={22}><path d="M5 1h10l5 5v17H5z" fill="#fff" /><path d="M15 1l5 5h-5z" fill="#d8541e" /><rect x="8" y="11" width="9" height="8" fill="none" stroke="#d8541e" strokeWidth="1.500" /><path d="M8 15h9" stroke="#d8541e" /></I>,
  <Inkblot s={22} />,
];

const MainTools = () => (
  <ToolColumn>
    {toolLayout.map((t, i) =>
      t === "-" ? <ToolSep key={i} /> : (
        <ToolBtn key={i} $on={t === "select"}><I>{toolIcons[t]}</I></ToolBtn>
      )
    )}
  </ToolColumn>
);

const StrokePanel = () => (
  <DockPanel>
    <DockHead>
      <I s={16}>{cmdIcons.fill}</I>
      <DockTitle>Relleno y borde (Mayús+Ctrl+F)</DockTitle>
      <DockBtns>
        <MiniBtn><svg width="6" height="6"><path d="M6 0v6L0 3z" fill="#888" /></svg></MiniBtn>
        <MiniBtn><svg width="6" height="6"><path d="M0 0l6 6M6 0L0 6" stroke="#777" strokeWidth="1.500" /></svg></MiniBtn>
      </DockBtns>
    </DockHead>
    <DockFrame>
      <TabRow>
        <Tab $w={84} $sep>
          <svg width="16" height="16"><rect width="16" height="16" fill="url(#gb)" /></svg>
          Relleno
        </Tab>
        <Tab $w={131}>
          <svg width="16" height="16"><rect x=".5" y=".5" width="15" height="15" fill="#f6f5f4" stroke="#444" /></svg>
          Color de trazo
        </Tab>
        <Tab $w={131} $active>
          <svg width="16" height="16"><path d="M0 4h12" stroke="#111" strokeWidth="1.200" /><path d="M11 1v6l5-3z" fill="#111" /><path d="M0 9h2M5 9h2M10 9h2" stroke="#111" strokeWidth="1.200" /><path d="M0 14h16" stroke="#111" strokeWidth="1.200" /></svg>
          Estilo de trazo
        </Tab>
      </TabRow>
      <StrokeFrame>
        <FormRow $h={30}>
          <FormLabel>Ancho:</FormLabel>
          <Spin value="0,222" w={135} h={30} />
          <Combo text="mm" w={56} />
        </FormRow>
        <FormRow $h={28} $mt={-1}>
          <FormLabel>Guiones:</FormLabel>
          <ComboBox $w={127} $h={29}>
            <DashSample width="82" height="3"><line x1="0" x2="82" y1="1.500" y2="1.500" stroke="#8e8b87" strokeWidth="1.500" strokeDasharray="1.500 4.700" /></DashSample>
            <DownCaret $c="#9b9792" />
          </ComboBox>
          <Spin value="0,00" w={111} h={29} />
        </FormRow>
        <FormRow $h={32}>
          <FormLabel>Marcadores:</FormLabel>
          <Combo w={77.33} h={32} />
          <Combo w={77.33} h={32} />
          <Combo w={77.33} h={32} />
        </FormRow>
        <FormRow $h={32}>
          <FormLabel>Unión:</FormLabel>
          <StyleBtn>{joinCap("j1")}</StyleBtn>
          <StyleBtn>{joinCap("j2")}</StyleBtn>
          <StyleBtn>{joinCap("j3")}</StyleBtn>
          <Spin value="4,00" w={120} h={32} />
        </FormRow>
        <FormRow $h={32}>
          <FormLabel>Punta:</FormLabel>
          <StyleBtn>{joinCap("c1")}</StyleBtn>
          <StyleBtn>{joinCap("c2")}</StyleBtn>
          <StyleBtn>{joinCap("c3")}</StyleBtn>
        </FormRow>
        <FormRow $h={32}>
          <FormLabel>Orden:</FormLabel>
          <StyleBtn><OrderIcon n={0} /></StyleBtn>
          <StyleBtn><OrderIcon n={1} /></StyleBtn>
          <StyleBtn><OrderIcon n={2} /></StyleBtn>
        </FormRow>
        <FormRow $h={32}>
          <FormLabel />
          <StyleBtn><OrderIcon n={3} /></StyleBtn>
          <StyleBtn><OrderIcon n={4} /></StyleBtn>
          <StyleBtn><OrderIcon n={5} /></StyleBtn>
        </FormRow>
      </StrokeFrame>
      <BlendRow>
        <BlendLabel>Modo de mezcla:</BlendLabel>
        <Combo text="Normal" w={134} />
      </BlendRow>
      <DoubleRule />
      <SliderRow $first>
        <Slider>Desenfoque (%)</Slider>
        <Spin value="0,0" w={97} h={30} pad={1} btn={[29, 29]} />
      </SliderRow>
      <SliderRow>
        <Slider $full>Opacidad (%)</Slider>
        <Spin value="100,0" w={97} h={30} pad={0} btn={[29, 29]} />
      </SliderRow>
    </DockFrame>
  </DockPanel>
);

export default function App() {
  return (
    <Screen>
      <GlobalStyle />
      <Defs />
      <TopBar>
        <TopLeft>
          <Activities>Actividades</Activities>
          <AppName><Inkblot s={16} />Inkscape<DownCaret /></AppName>
        </TopLeft>
        <Clock>jue 12:21<Dot /></Clock>
        <TopRight>
          <I s={18}><path d="M9 2h6v5h-2v3h7v4h3v6h-7v-6h3v-2h-6v2h3v6H9v-6h3v-2H6v2h3v6H2v-6h3v-4h7V7H9z" fill="#d6d8d6" /></I>
          <I s={18}><path d="M2 9h4l6-5v16l-6-5H2z" fill="#b8b8b4" /><path d="M15 8a5 5 0 010 8M18 5a9 9 0 010 14" fill="none" stroke="#d6d8d6" strokeWidth="2" /></I>
          <I s={18}><path d="M7 5a9.500 9.500 0 1010 0M12 1v11" fill="none" stroke="#d6d8d6" strokeWidth="2.200" /></I>
          <DownCaret />
        </TopRight>
      </TopBar>
      <TitleBar>
        <TitleText>*Documento nuevo 1 - Inkscape</TitleText>
        <WinButtons>
          <WinBtn><svg width="8" height="2"><rect width="8" height="2" fill="#3b3a36" /></svg></WinBtn>
          <WinBtn><svg width="9" height="7"><rect x=".5" y=".5" width="8" height="6" fill="none" stroke="#3b3a36" /></svg></WinBtn>
          <WinBtn $close><svg width="7" height="7"><path d="M0 0l7 7M7 0L0 7" stroke="#4a2010" strokeWidth="1.300" /></svg></WinBtn>
        </WinButtons>
        <MenuBar>
          {["Archivo", "Edición", "Ver", "Capa", "Objeto", "Trayecto", "Texto", "Filtros", "Extensiones", "Ayuda"].map((m) => (
            <span key={m}>{m}</span>
          ))}
        </MenuBar>
      </TitleBar>
      <ControlsBar>
        <BarIcon $faded><I s={20}>{barIcons.selall}</I></BarIcon>
        <BarIcon><I s={20}>{barIcons.selin}</I></BarIcon>
        <BarIcon $faded><I s={20}>{barIcons.desel}</I></BarIcon>
        <VSep />
        {["rotl", "rotr", "fliph", "flipv"].map((k) => (
          <BarIcon key={k} $faded><I s={20}>{barIcons[k]}</I></BarIcon>
        ))}
        <VSep />
        {["top", "up", "down", "bot"].map((k) => (
          <BarIcon key={k} $faded><I s={20}>{barIcons[k]}</I></BarIcon>
        ))}
        <VSep />
        <BarLabel $w={17} $ml={3}>X:</BarLabel>
        <Spin value="9,707" w={163} />
        <BarLabel $w={17} $ml={8}>Y:</BarLabel>
        <Spin value="58,321" w={162} />
        <BarLabel $w={23} $ml={8}>W:</BarLabel>
        <Spin value="189,294" w={158} />
        <BarIcon $ml={6}><I s={16}>{barIcons.lockOpen}</I></BarIcon>
        <BarLabel $w={18} $ml={2}>H:</BarLabel>
        <Spin value="187,548" w={159} />
        <Combo text="mm" w={55} on ml={6} />
        <ToggleRow>
          {[0, 1, 2, 3].map((k) => (
            <ToggleBtn key={k}><ScaleToggle kind={k} /></ToggleBtn>
          ))}
        </ToggleRow>
      </ControlsBar>
      <Workspace>
        <MainTools />
        <Center>
          <HRulerRow>
            <RulerCorner><I s={15}>{barIcons.lockClosed}</I></RulerCorner>
            <HRuler />
            <CornerBtn>1</CornerBtn>
          </HRulerRow>
          <MidRow>
            <VRuler />
            <Canvas>
              <Page><Blob /></Page>
            </Canvas>
            <VGutter><VThumb /></VGutter>
          </MidRow>
          <HBarRow>
            <HTrack><HThumb /></HTrack>
            <CornerBtn>
              <svg width="13" height="13"><path d="M2 0l10 6-10 7z" fill="#cfe5c8" /><path d="M2 4l5 3-5 4z" fill="#e4c4e8" /></svg>
            </CornerBtn>
          </HBarRow>
        </Center>
        <StrokePanel />
        <CmdColumn>
          {cmdLayout.map((c, i) =>
            c === "-" ? <CmdSep key={i} /> : c === ">" ? (
              <CmdBtn key={i}><svg width="6" height="10"><path d="M0 0l6 5-6 5z" fill="#444" /></svg></CmdBtn>
            ) : (
              <CmdBtn key={i}><I s={c === "layers" ? 20 : 22}>{cmdIcons[c]}</I></CmdBtn>
            )
          )}
        </CmdColumn>
        <SnapColumn>
          {snapLayout.map(([name, on, h], i) =>
            name === "-" ? <SnapSep key={i} $h={h} /> : on ? (
              <ToggleBtn key={i} $w={27} $h={h}><I s={18}>{snapIcons[name]}</I></ToggleBtn>
            ) : (
              <SnapBtn key={i} $h={h}><I s={18}>{snapIcons[name]}</I></SnapBtn>
            )
          )}
        </SnapColumn>
      </Workspace>
      <PaletteRow>
        <NoColor>
          <svg width="19" height="13"><path d="M1 0l16 13M17 0L1 13" stroke="#700" strokeWidth="1.800" /></svg>
        </NoColor>
        {swatches.map((c, i) => <Swatch key={i} $c={c} />)}
        <Swatch $c="#e9ddaf" $w={9} />
        <PalArrow />
      </PaletteRow>
      <PalGap><PalThumb /></PalGap>
      <StatusBar>
        <FillInfo>
          <span>Relleno:</span><span>N/D</span>
          <span>Trazo:</span><span>N/D</span>
        </FillInfo>
        <OLabel>O:</OLabel>
        <Spin value="100" w={104} h={32} pad={7} />
        <StatusSep $ml={5} />
        <StatusIcon $w={32}><I s={20}>{barIcons.eye}</I></StatusIcon>
        <StatusIcon $w={30}><I s={18}>{barIcons.lockOpen}</I></StatusIcon>
        <Combo text="•Capa 1" w={75} h={32} on bold ml={0} />
        <Message>No se han seleccionado objetos. Haga clic, Mayús+clic o arrastre para seleccionar los objetos.</Message>
        <StatusSep />
        <Coords>
          <span>X:</span><CoordVal>-511,00</CoordVal>
          <span>Y:</span><CoordVal>-91,44</CoordVal>
        </Coords>
        <ZLabel $w={24} $ml={10}>Z:</ZLabel>
        <Spin value="35%" w={100} h={32} on pad={11} btn={[21, 25]} />
        <ZLabel $w={23} $ml={13}>R:</ZLabel>
        <Spin value="0,00°" w={109} h={32} on pad={13} btn={[21, 25]} />
      </StatusBar>
      <DockBar>
        <DockLeft>
          {dockIcons.map((ic, i) => (
            <DockItem key={i} $active={i === 8}>
              {ic}
              {(i === 6 || i === 8) && <RunDot />}
            </DockItem>
          ))}
        </DockLeft>
        <Wallpaper>
          <svg width="30" height="14"><path d="M1 0v9h28V0M15 0v9" fill="none" stroke="#5f4f3f" strokeWidth="2" /></svg>
        </Wallpaper>
        <DockRight>
          <svg width="11" height="11">
            {[0, 4, 8].map((y) => [0, 4, 8].map((x) => <rect key={`${x}${y}`} x={x} y={y} width="2" height="2" fill="#e8e8e6" />))}
          </svg>
        </DockRight>
      </DockBar>
    </Screen>
  );
}
